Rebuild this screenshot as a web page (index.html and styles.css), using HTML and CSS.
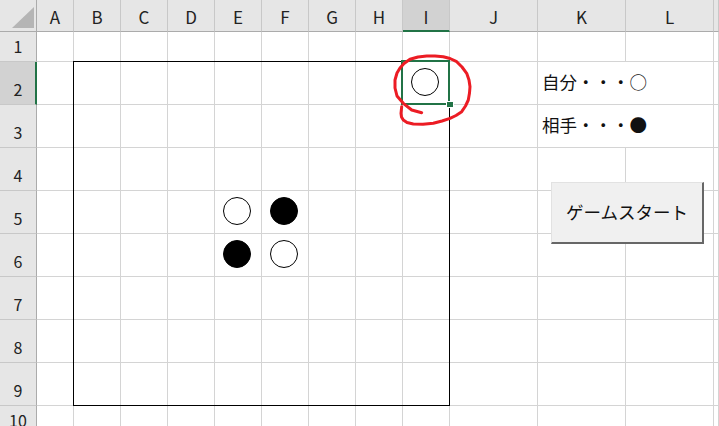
FILE: index.html
```html
<!DOCTYPE html>
<html lang="ja">
<head>
<meta charset="UTF-8" />
<meta name="viewport" content="width=device-width, initial-scale=1" />
<title>オセロ</title>
<link rel="stylesheet" href="styles.css">
</head>
<body>
<div class="sheet">
    <div class="row head">
        <div class="corner"><span class="tri"></span></div>
        <div class="col">A</div>
        <div class="col">B</div>
        <div class="col">C</div>
        <div class="col">D</div>
        <div class="col">E</div>
        <div class="col">F</div>
        <div class="col">G</div>
        <div class="col">H</div>
        <div class="col sel">I</div>
        <div class="col">J</div>
        <div class="col">K</div>
        <div class="col">L</div>
        <div class="col"></div>
    </div>

    <div class="row short">
        <div class="num">1</div>
        <div class="cell"></div><div class="cell"></div><div class="cell"></div><div class="cell"></div>
        <div class="cell"></div><div class="cell"></div><div class="cell"></div><div class="cell"></div>
        <div class="cell"></div><div class="cell"></div><div class="cell"></div><div class="cell"></div>
        <div class="cell"></div>
    </div>

    <div class="row">
        <div class="num sel">2</div>
        <div class="cell"></div><div class="cell"></div><div class="cell"></div><div class="cell"></div>
        <div class="cell"></div><div class="cell"></div><div class="cell"></div><div class="cell"></div>
        <div class="cell stone active"><span class="disc white"></span></div>
        <div class="cell"></div>
        <div class="cell note">自分・・・○</div>
        <div class="cell"></div>
    </div>

    <div class="row">
        <div class="num">3</div>
        <div class="cell"></div><div class="cell"></div><div class="cell"></div><div class="cell"></div>
        <div class="cell"></div><div class="cell"></div><div class="cell"></div><div class="cell"></div>
        <div class="cell"></div><div class="cell"></div>
        <div class="cell note">相手・・・●</div>
        <div class="cell"></div>
    </div>

    <div class="row">
        <div class="num">4</div>
        <div class="cell"></div><div class="cell"></div><div class="cell"></div><div class="cell"></div>
        <div class="cell"></div><div class="cell"></div><div class="cell"></div><div class="cell"></div>
        <div class="cell"></div><div class="cell"></div><div class="cell"></div><div class="cell"></div>
        <div class="cell"></div>
    </div>

    <div class="row">
        <div class="num">5</div>
        <div class="cell"></div><div class="cell"></div><div class="cell"></div><div class="cell"></div>
        <div class="cell stone"><span class="disc white"></span></div>
        <div class="cell stone"><span class="disc black"></span></div>
        <div class="cell"></div><div class="cell"></div><div class="cell"></div><div class="cell"></div>
        <div class="cell"></div><div class="cell"></div><div class="cell"></div>
    </div>

    <div class="row">
        <div class="num">6</div>
        <div class="cell"></div><div class="cell"></div><div class="cell"></div><div class="cell"></div>
        <div class="cell stone"><span class="disc black"></span></div>
        <div class="cell stone"><span class="disc white"></span></div>
        <div class="cell"></div><div class="cell"></div><div class="cell"></div><div class="cell"></div>
        <div class="cell"></div><div class="cell"></div><div class="cell"></div>
    </div>

    <div class="row">
        <div class="num">7</div>
        <div class="cell"></div><div class="cell"></div><div class="cell"></div><div class="cell"></div>
        <div class="cell"></div><div class="cell"></div><div class="cell"></div><div class="cell"></div>
        <div class="cell"></div><div class="cell"></div><div class="cell"></div><div class="cell"></div>
        <div class="cell"></div>
    </div>

    <div class="row">
        <div class="num">8</div>
        <div class="cell"></div><div class="cell"></div><div class="cell"></div><div class="cell"></div>
        <div class="cell"></div><div class="cell"></div><div class="cell"></div><div class="cell"></div>
        <div class="cell"></div><div class="cell"></div><div class="cell"></div><div class="cell"></div>
        <div class="cell"></div>
    </div>

    <div class="row">
        <div class="num">9</div>
        <div class="cell"></div><div class="cell"></div><div class="cell"></div><div class="cell"></div>
        <div class="cell"></div><div class="cell"></div><div class="cell"></div><div class="cell"></div>
        <div class="cell"></div><div class="cell"></div><div class="cell"></div><div class="cell"></div>
        <div class="cell"></div>
    </div>

    <div class="row short">
        <div class="num">10</div>
        <div class="cell"></div><div class="cell"></div><div class="cell"></div><div class="cell"></div>
        <div class="cell"></div><div class="cell"></div><div class="cell"></div><div class="cell"></div>
        <div class="cell"></div><div class="cell"></div><div class="cell"></div><div class="cell"></div>
        <div class="cell"></div>
    </div>

    <!-- 盤の枠 (B2:I9) -->
    <div class="board"></div>

    <button type="button" class="start">ゲームスタート</button>

    <!-- 手書きの赤丸 -->
    <svg class="mark" viewBox="0 0 719 426" width="719" height="426">
        <polyline points="421.7,112.7 411.7,110 403.3,103.3 397,96 395,88 395,80 397,73 400,68 404,63.5 410,59.3 418,57 426.7,56 435,56 443.3,56.7 450,58.5 456.7,61.7 462,67 466.7,73.3 469,80 470,86.7 469.5,93 468.3,100 465.5,106 461.7,111.7 456,115.5 450,118.3 442,121 433.3,123.3 423,124.2 413.3,124 407,122.5 403.3,120 401.5,117 401,113.3 401.7,106.7" />
    </svg>
</div>
</body>
</html>
```

FILE: styles.css
```css
/* Excel風シート */
* {
    box-sizing: border-box;
}
html, body {
    margin: 0;
    overflow: hidden;
    background: #fff;
}
body {
    font-family: "Noto Sans CJK JP", "Noto Sans", sans-serif;
    color: #222;
}
.sheet {
    position: relative;
    width: 719px;
    height: 426px;
    overflow: hidden;
}
.row {
    display: grid;
    grid-template-columns: 37px 37px repeat(8, 47px) repeat(3, 88px) 5px;
    height: 43px;
}
.row.short {
    height: 30px;
}
.row.head {
    height: 32px;
}

/* 見出し */
.corner {
    background: #e6e6e6;
    border-right: 1px solid #ababab;
    border-bottom: 1px solid #ababab;
    display: flex;
    align-items: flex-end;
    justify-content: flex-end;
    padding: 0 2px 3px 0;
}
.tri {
    width: 22px;
    height: 21px;
    background: #b5b5b5;
    clip-path: polygon(100% 0, 100% 100%, 0 100%);
}
.col {
    background: #e6e6e6;
    border-right: 1px solid #c8c8c8;
    border-bottom: 1px solid #ababab;
    display: flex;
    align-items: center;
    justify-content: center;
    font-size: 17px;
    line-height: 1;
    padding-top: 1px;
}
.col.sel {
    background: #d2d2d2;
    border-bottom: 2px solid #217346;
    padding-top: 2px;
}
.num {
    background: #e6e6e6;
    border-right: 1px solid #ababab;
    border-bottom: 1px solid #c8c8c8;
    display: flex;
    align-items: flex-end;
    justify-content: center;
    font-size: 16px;
    line-height: 1;
    padding-bottom: 7px;
}
.num.sel {
    background: #d2d2d2;
    border-right: 2px solid #217346;
    padding-left: 1px;
}

/* セル */
.cell {
    border-right: 1px solid #d4d4d4;
    border-bottom: 1px solid #d4d4d4;
}
.stone {
    display: flex;
    align-items: center;
    justify-content: center;
    padding: 0 2px 3px 0;
}
.disc {
    width: 28px;
    height: 28px;
    border-radius: 50%;
    border: 1.2px solid #000;
}
.disc.white {
    background: #fff;
}
.disc.black {
    background: #000;
}
.active {
    position: relative;
}
.active::after {
    content: "";
    position: absolute;
    top: -2px;
    left: -2px;
    right: -1px;
    bottom: -1px;
    border: 2px solid #217346;
    z-index: 2;
}
.active::before {
    content: "";
    position: absolute;
    right: -4px;
    bottom: -3px;
    width: 6px;
    height: 5px;
    background: #217346;
    border: 1px solid #fff;
    box-sizing: content-box;
    margin: -1px;
    z-index: 3;
}
.note {
    grid-column: span 2;
    display: flex;
    align-items: center;
    padding: 0 0 3px 4px;
    font-size: 17.5px;
    line-height: 1;
    white-space: nowrap;
    color: #111;
}

/* 盤の外枠 */
.board {
    position: absolute;
    left: 73px;
    top: 61px;
    width: 377px;
    height: 345px;
    border: 1px solid #000;
    pointer-events: none;
    z-index: 1;
}

/* フォームボタン */
.start {
    position: absolute;
    left: 551px;
    top: 182px;
    width: 153px;
    height: 62px;
    margin: 0;
    padding: 0 0 2px;
    background: #f0f0f0;
    border-top: 1px solid #e2e2e2;
    border-left: 1px solid #e2e2e2;
    border-right: 2px solid #676767;
    border-bottom: 2px solid #676767;
    border-radius: 0;
    font-family: "Noto Sans CJK JP", sans-serif;
    font-size: 17.5px;
    color: #111;
    cursor: pointer;
}

.mark {
    position: absolute;
    left: 0;
    top: 0;
    pointer-events: none;
    z-index: 4;
}
.mark polyline {
    fill: none;
    stroke: #ec1c24;
    stroke-width: 3;
    stroke-linejoin: round;
    stroke-linecap: round;
}
```
